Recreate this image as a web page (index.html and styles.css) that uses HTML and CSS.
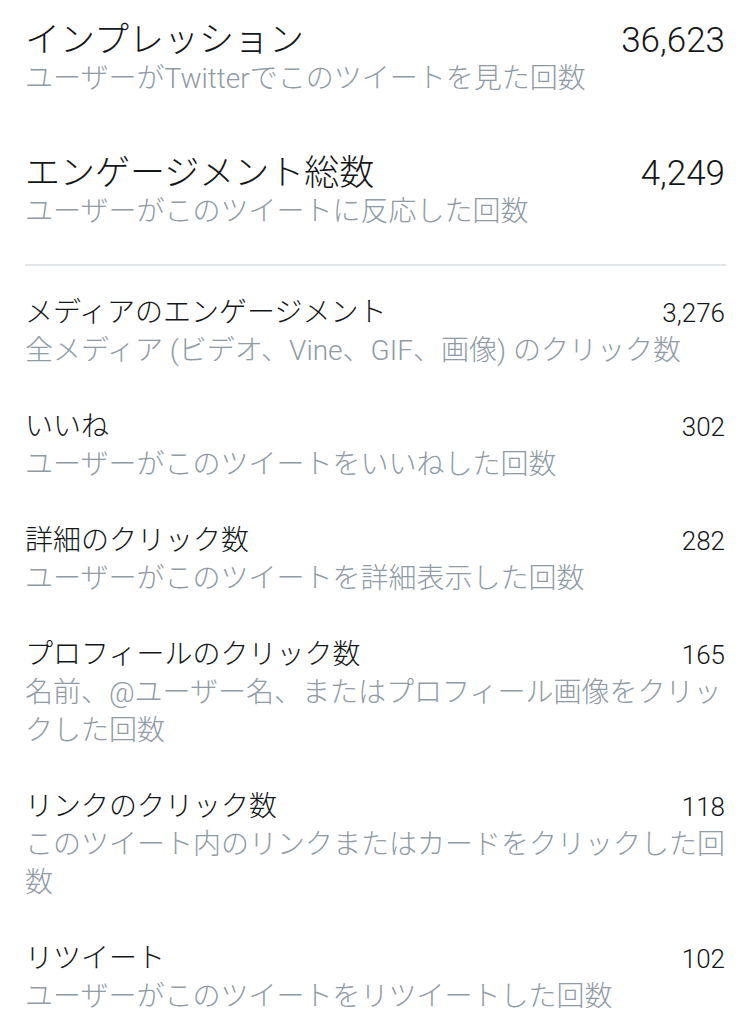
FILE: index.html
```html
<!DOCTYPE html>
<html lang="ja">
<head>
    <meta charset="UTF-8">
    <meta name="viewport" content="width=device-width, initial-scale=1.0">
    <title>ツイートアクティビティ</title>
    <link rel="stylesheet" href="styles.css">
</head>
<body>

    <div class="summary">
        <div class="stat big">
            <div class="stat-head">
                <span class="label">インプレッション</span>
                <span class="count">36,623</span>
            </div>
            <p class="desc">ユーザーがTwitterでこのツイートを見た回数</p>
        </div>
        <div class="stat big">
            <div class="stat-head">
                <span class="label">エンゲージメント総数</span>
                <span class="count">4,249</span>
            </div>
            <p class="desc">ユーザーがこのツイートに反応した回数</p>
        </div>
    </div>

    <div class="details">
        <div class="stat">
            <div class="stat-head">
                <span class="label">メディアのエンゲージメント</span>
                <span class="count">3,276</span>
            </div>
            <p class="desc">全メディア (ビデオ、Vine、GIF、画像) のクリック数</p>
        </div>
        <div class="stat">
            <div class="stat-head">
                <span class="label">いいね</span>
                <span class="count">302</span>
            </div>
            <p class="desc">ユーザーがこのツイートをいいねした回数</p>
        </div>
        <div class="stat">
            <div class="stat-head">
                <span class="label">詳細のクリック数</span>
                <span class="count">282</span>
            </div>
            <p class="desc">ユーザーがこのツイートを詳細表示した回数</p>
        </div>
        <div class="stat">
            <div class="stat-head">
                <span class="label">プロフィールのクリック数</span>
                <span class="count">165</span>
            </div>
            <p class="desc">名前、@ユーザー名、またはプロフィール画像をクリックした回数</p>
        </div>
        <div class="stat">
            <div class="stat-head">
                <span class="label">リンクのクリック数</span>
                <span class="count">118</span>
            </div>
            <p class="desc">このツイート内のリンクまたはカードをクリックした回数</p>
        </div>
        <div class="stat">
            <div class="stat-head">
                <span class="label">リツイート</span>
                <span class="count">102</span>
            </div>
            <p class="desc">ユーザーがこのツイートをリツイートした回数</p>
        </div>
    </div>

</body>
</html>
```

FILE: styles.css
```css
body {
    margin: 0;
    padding: 0 24px 0 25px;
    background-color: #ffffff;
    font-family: "Roboto", "Noto Sans CJK JP", sans-serif;
    font-weight: 300;
    color: #14171a;
}

.summary {
    padding-top: 22px;
    padding-bottom: 33px;
    border-bottom: 2px solid #e3e6e9;
    display: flex;
    flex-direction: column;
    gap: 57px;
}

.details {
    padding-top: 28px;
    display: flex;
    flex-direction: column;
    gap: 38px;
}

.stat-head {
    display: flex;
    justify-content: space-between;
    align-items: center;
    height: 38px;
}

.label {
    font-size: 28px;
    line-height: 38px;
    white-space: nowrap;
}

.count {
    font-size: 26px;
    line-height: 38px;
    font-weight: 300;
    margin-right: 1px;
}

.desc {
    margin: 0;
    font-size: 28px;
    line-height: 38px;
    color: #8f9ba6;
}

.big .label {
    font-size: 35px;
}

.big .count {
    font-size: 35px;
}
```
